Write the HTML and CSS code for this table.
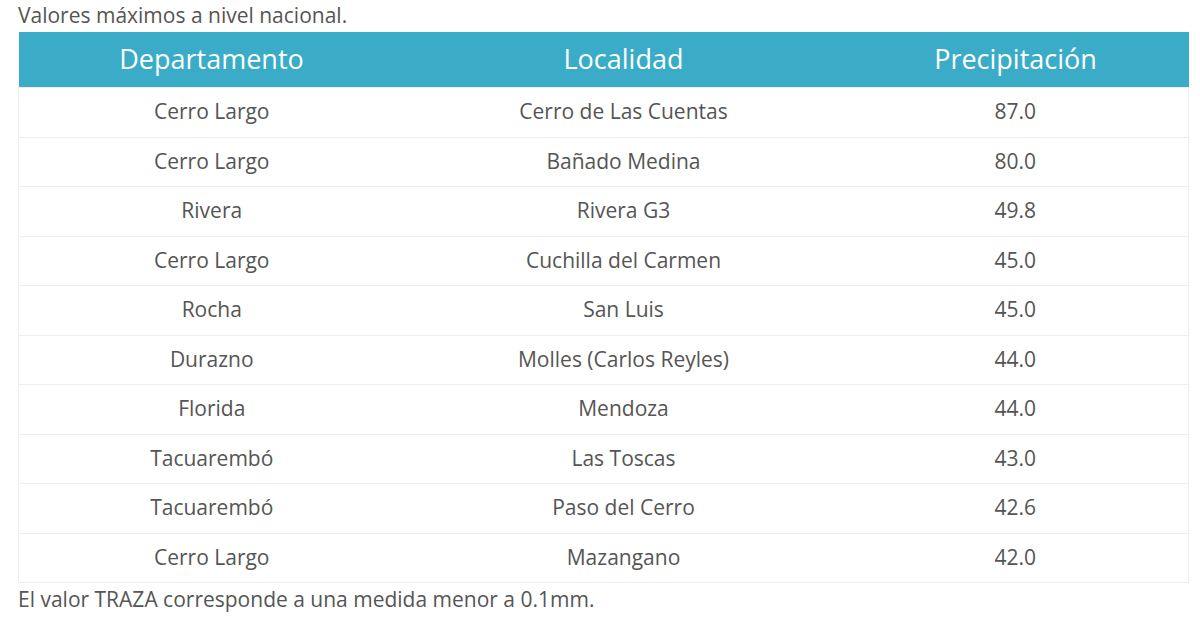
FILE: index.html
```html
<!DOCTYPE html>
<html lang="es">
<head>
<meta charset="utf-8">
<link rel="stylesheet" href="styles.css">
</head>
<body>
<div class="wrap">
  <p class="caption">Valores máximos a nivel nacional.</p>
  <table class="data">
    <thead>
      <tr><th class="c1">Departamento</th><th class="c2">Localidad</th><th class="c3">Precipitación</th></tr>
    </thead>
    <tbody>
      <tr><td>Cerro Largo</td><td>Cerro de Las Cuentas</td><td>87.0</td></tr>
      <tr><td>Cerro Largo</td><td>Bañado Medina</td><td>80.0</td></tr>
      <tr><td>Rivera</td><td>Rivera G3</td><td>49.8</td></tr>
      <tr><td>Cerro Largo</td><td>Cuchilla del Carmen</td><td>45.0</td></tr>
      <tr><td>Rocha</td><td>San Luis</td><td>45.0</td></tr>
      <tr><td>Durazno</td><td>Molles (Carlos Reyles)</td><td>44.0</td></tr>
      <tr><td>Florida</td><td>Mendoza</td><td>44.0</td></tr>
      <tr><td>Tacuarembó</td><td>Las Toscas</td><td>43.0</td></tr>
      <tr><td>Tacuarembó</td><td>Paso del Cerro</td><td>42.6</td></tr>
      <tr><td>Cerro Largo</td><td>Mazangano</td><td>42.0</td></tr>
    </tbody>
  </table>
  <p class="note">El valor TRAZA corresponde a una medida menor a 0.1mm.</p>
</div>
</body>
</html>
```

FILE: styles.css
```css
html, body {
  margin: 0;
  padding: 0;
  background: #fff;
}
body {
  font-family: "Open Sans", "Liberation Sans", sans-serif;
  color: #555;
}
.wrap {
  padding: 0 11px 0 18px;
}
.caption {
  margin: 0 0 2px;
  font-size: 21px;
  line-height: 30px;
}
.data {
  width: 100%;
  border-collapse: collapse;
  table-layout: fixed;
}
.data th {
  background: #3aacc7;
  color: #fff;
  font-weight: 400;
  font-size: 27px;
  height: 53px;
  padding: 0 0 2px;
  text-align: center;
  border: 0;
}
.c1 { width: 386px; }
.c2 { width: 438px; }
.data td {
  font-size: 21px;
  text-align: center;
  height: 46.5px;
  padding: 0 0 2px;
  border-top: 1px solid #eeeeee;
  border-bottom: 1px solid #eeeeee;
}
.data td:first-child { border-left: 1px solid #eeeeee; }
.data td:last-child { border-right: 1px solid #eeeeee; }
.note {
  margin: 2px 0 0;
  font-size: 21px;
  line-height: 28px;
}
```
